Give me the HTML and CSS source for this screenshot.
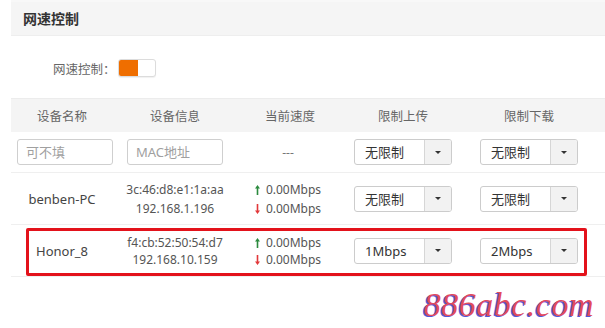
FILE: index.html
```html
<!DOCTYPE html>
<html lang="zh-CN">
<head>
    <meta charset="UTF-8">
    <title>网速控制</title>
    <link rel="stylesheet" href="styles.css">
</head>
<body>
    <div class="page">
        <div class="panel-title">网速控制</div>

        <div class="switch-row">
            <span class="switch-label">网速控制：</span>
            <span class="switch"><span class="switch-on"></span></span>
        </div>

        <div class="speed-table">
            <div class="row head">
                <div class="cell">设备名称</div>
                <div class="cell">设备信息</div>
                <div class="cell">当前速度</div>
                <div class="cell">限制上传</div>
                <div class="cell">限制下载</div>
            </div>

            <div class="row add">
                <div class="cell left"><input class="field" type="text" placeholder="可不填"></div>
                <div class="cell"><input class="field" type="text" placeholder="MAC地址"></div>
                <div class="cell dash">---</div>
                <div class="cell">
                    <div class="select"><span class="select-text">无限制</span><span class="select-btn"><i class="caret"></i></span></div>
                </div>
                <div class="cell">
                    <div class="select"><span class="select-text">无限制</span><span class="select-btn"><i class="caret"></i></span></div>
                </div>
            </div>

            <div class="row dev">
                <div class="cell name">benben-PC</div>
                <div class="cell info">3c:46:d8:e1:1a:aa<br>192.168.1.196</div>
                <div class="cell">
                    <div class="speed">
                        <div><svg class="arrow up" width="5" height="10" viewBox="0 0 5 10"><path d="M2.5 0 L5 3.5 H3.3 V10 H1.7 V3.5 H0 Z"/></svg>0.00Mbps</div>
                        <div><svg class="arrow down" width="5" height="10" viewBox="0 0 5 10"><path d="M2.5 10 L5 6.5 H3.3 V0 H1.7 V6.5 H0 Z"/></svg>0.00Mbps</div>
                    </div>
                </div>
                <div class="cell">
                    <div class="select"><span class="select-text">无限制</span><span class="select-btn"><i class="caret"></i></span></div>
                </div>
                <div class="cell">
                    <div class="select"><span class="select-text">无限制</span><span class="select-btn"><i class="caret"></i></span></div>
                </div>
            </div>

            <div class="row dev marked">
                <div class="cell name">Honor_8</div>
                <div class="cell info">f4:cb:52:50:54:d7<br>192.168.10.159</div>
                <div class="cell">
                    <div class="speed">
                        <div><svg class="arrow up" width="5" height="10" viewBox="0 0 5 10"><path d="M2.5 0 L5 3.5 H3.3 V10 H1.7 V3.5 H0 Z"/></svg>0.00Mbps</div>
                        <div><svg class="arrow down" width="5" height="10" viewBox="0 0 5 10"><path d="M2.5 10 L5 6.5 H3.3 V0 H1.7 V6.5 H0 Z"/></svg>0.00Mbps</div>
                    </div>
                </div>
                <div class="cell">
                    <div class="select"><span class="select-text">1Mbps</span><span class="select-btn"><i class="caret"></i></span></div>
                </div>
                <div class="cell">
                    <div class="select"><span class="select-text">2Mbps</span><span class="select-btn"><i class="caret"></i></span></div>
                </div>
                <div class="mark"></div>
            </div>
        </div>

        <div class="watermark">886abc.com</div>
    </div>
</body>
</html>
```

FILE: styles.css
```css
body {
    margin: 0;
    background-color: #fff;
    font-family: "Noto Sans", "Noto Sans CJK SC", sans-serif;
    color: #333;
    overflow: hidden;
}

.page {
    margin-left: 11px;
}

.panel-title {
    height: 36px;
    box-sizing: border-box;
    padding: 6px 0 0 12px;
    background-color: #f5f5f5;
    border-top: 2px solid #f8f8f8;
    border-bottom: 1px solid #eeeeee;
    font-size: 14px;
    font-weight: bold;
    color: #333;
}

.switch-row {
    height: 62px;
    display: flex;
    align-items: center;
    padding-left: 42px;
    box-sizing: border-box;
    padding-top: 2px;
}

.switch-label {
    font-size: 12.5px;
    color: #666;
    margin-right: 2px;
}

.switch {
    display: inline-block;
    width: 38px;
    height: 18px;
    box-sizing: border-box;
    border: 1px solid #dcdcdc;
    border-radius: 3px;
    background-color: #fff;
    box-shadow: 0 1px 1px rgba(0, 0, 0, 0.06);
    overflow: hidden;
}

.switch-on {
    display: block;
    width: 19px;
    height: 100%;
    background-color: #ef6e00;
}

.speed-table {
    border-top: 1px solid #ececec;
}

.row {
    display: grid;
    grid-template-columns: 102px 124px 106px 120px 132px 1fr;
    align-items: center;
    border-bottom: 1px solid #efefef;
    box-sizing: border-box;
}

.cell {
    display: flex;
    justify-content: center;
    text-align: center;
}

.cell.left {
    justify-content: flex-start;
    padding-left: 6px;
}

.head {
    height: 33px;
    background-color: #f4f4f4;
    border-bottom: none;
    font-size: 12.5px;
    color: #666;
}

.add {
    height: 41px;
}

.dev {
    height: 52px;
}

.field {
    width: 96px;
    height: 26px;
    box-sizing: border-box;
    border: 1px solid #cfcfcf;
    border-radius: 3px;
    padding: 0 8px;
    font-family: "Noto Sans", "Noto Sans CJK SC", sans-serif;
    font-size: 13px;
    color: #333;
    outline: none;
}

.field::placeholder {
    color: #a0a0a0;
}

.dash {
    font-size: 12px;
    color: #777;
    padding-right: 4px;
}

.select {
    display: flex;
    width: 98px;
    height: 26px;
    box-sizing: border-box;
    border: 1px solid #cccccc;
    border-radius: 3px;
    background-color: #fff;
    overflow: hidden;
}

.select-text {
    flex: 1;
    text-align: left;
    padding-left: 10px;
    font-size: 13px;
    line-height: 24px;
    color: #333;
}

.select-btn {
    width: 26px;
    display: flex;
    align-items: center;
    justify-content: center;
    background-color: #f2f2f2;
    border-left: 1px solid #d6d6d6;
}

.caret {
    width: 0;
    height: 0;
    border-left: 3px solid transparent;
    border-right: 3px solid transparent;
    border-top: 3px solid #333;
}

.name {
    font-size: 13px;
    color: #444;
}

.info {
    font-size: 12px;
    line-height: 19px;
    color: #555;
}

.speed {
    font-size: 12px;
    line-height: 19px;
    color: #555;
    text-align: left;
    padding-right: 4px;
}

.arrow {
    margin-right: 6px;
    vertical-align: -1px;
}

.arrow.up {
    fill: #2b8a3e;
}

.arrow.down {
    fill: #e2383a;
}

.marked {
    position: relative;
}

.marked .info,
.marked .speed {
    line-height: 17px;
}

.mark {
    position: absolute;
    left: 15px;
    top: 3px;
    width: 561px;
    height: 48px;
    box-sizing: border-box;
    border: 3px solid #e3121b;
    border-radius: 2px;
}

.watermark {
    text-align: right;
    padding: 9px 11px 0 0;
    font-family: "Liberation Serif", serif;
    font-style: italic;
    font-size: 34px;
    color: #e24a5e;
    text-shadow: -1.5px 0.5px 0 #5557d8;
    letter-spacing: 0.5px;
}
```
